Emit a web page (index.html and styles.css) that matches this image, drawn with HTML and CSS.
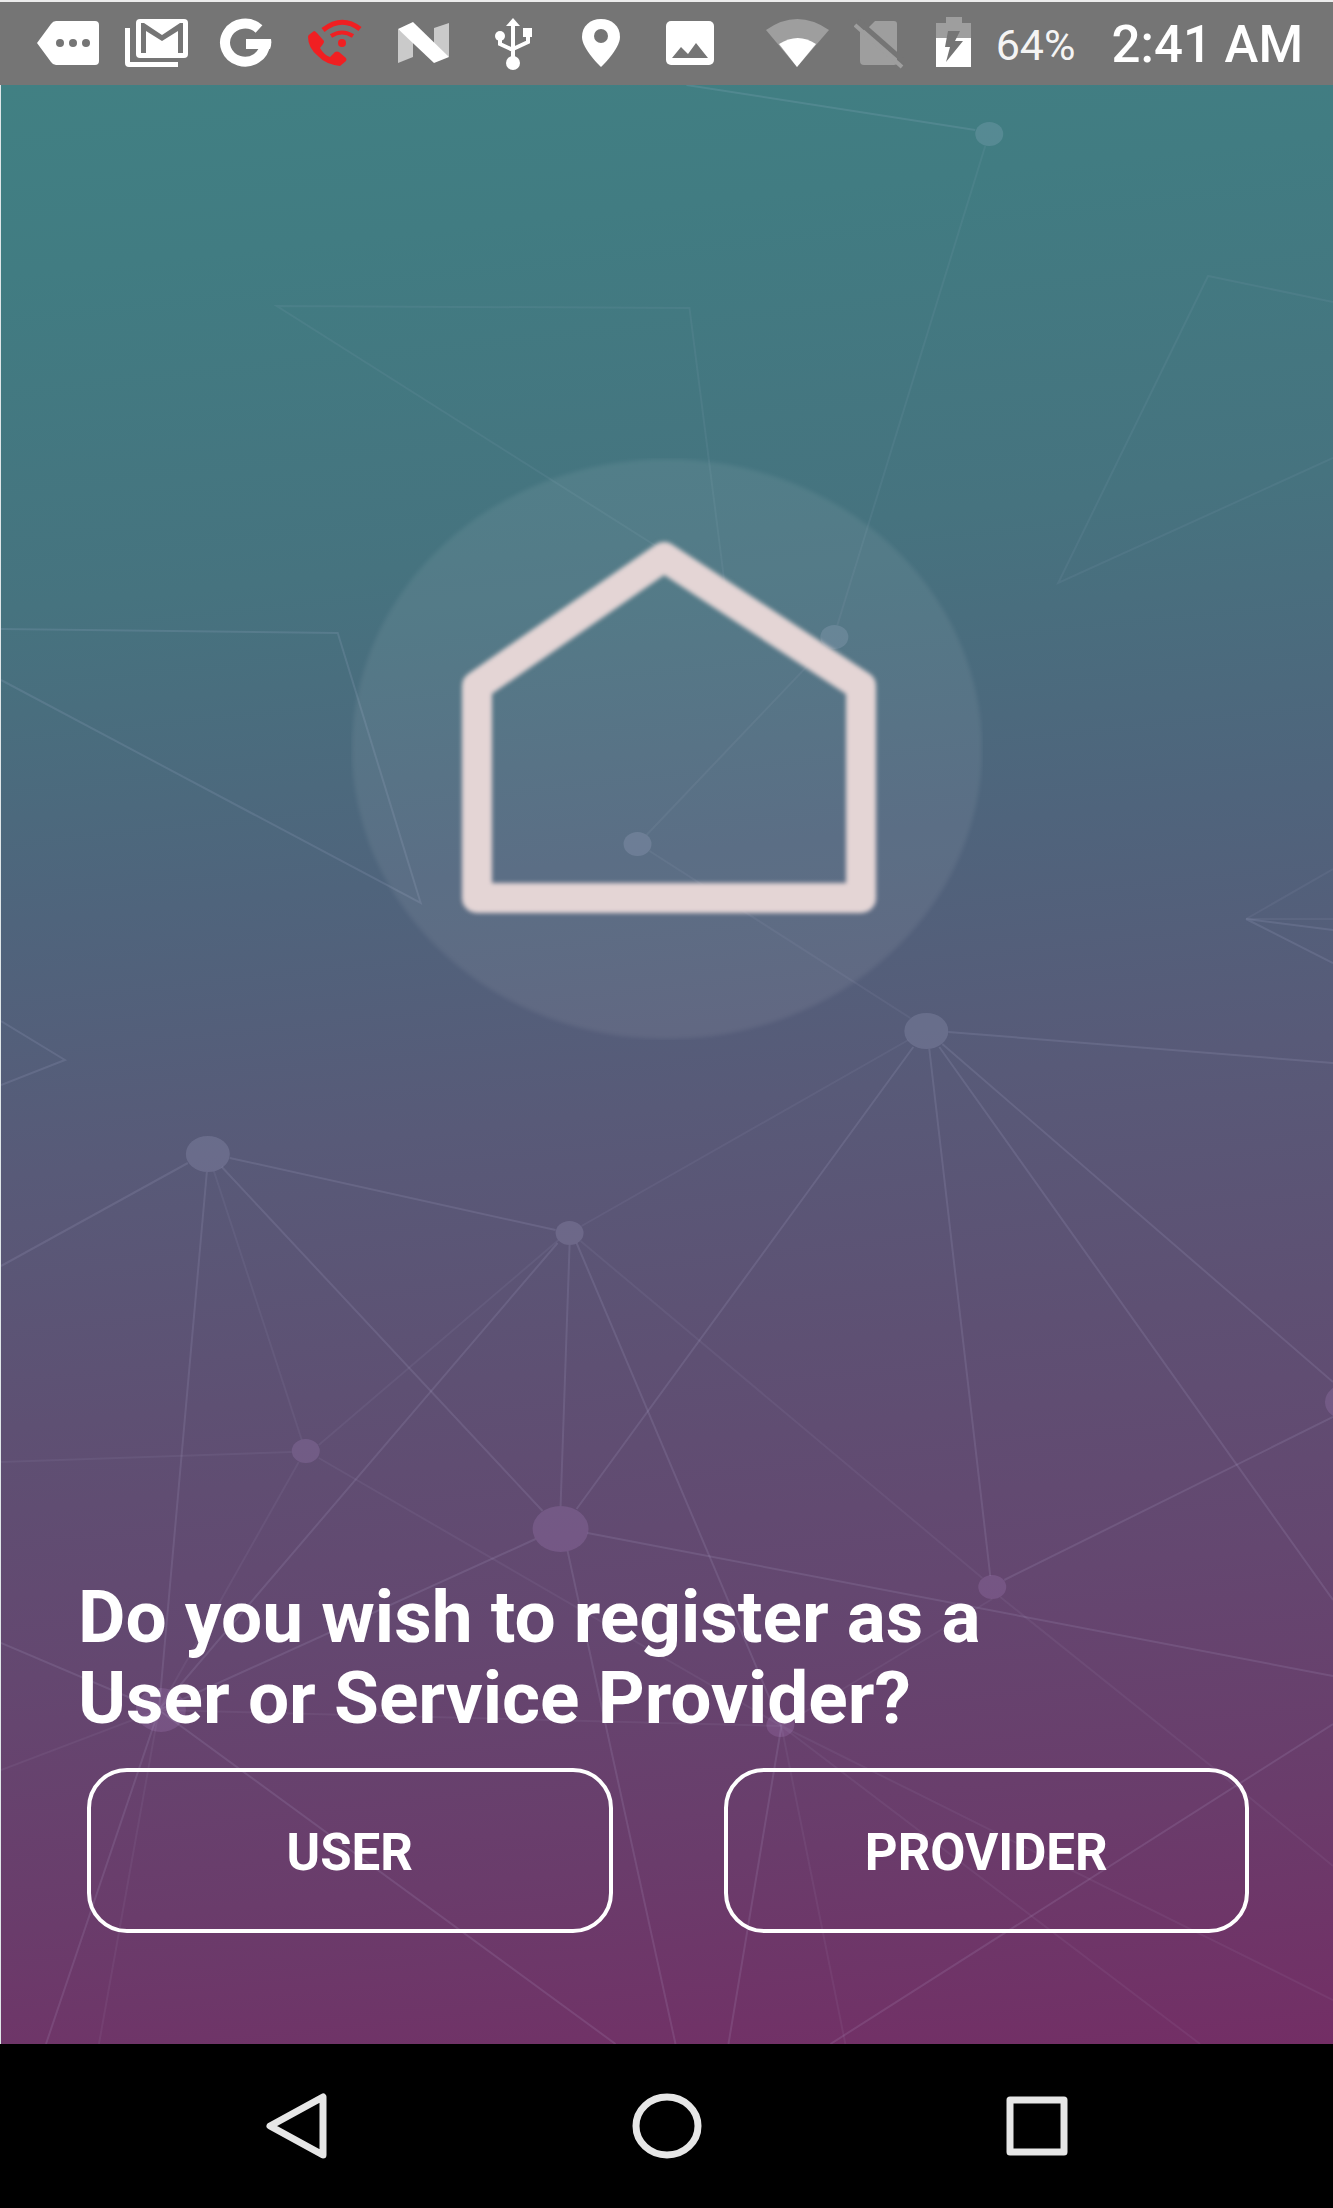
FILE: index.html
```html
<!DOCTYPE html>
<html lang="en">
<head>
<meta charset="utf-8">
<meta name="viewport" content="width=device-width, initial-scale=1">
<title>Register</title>
<link rel="stylesheet" href="styles.css">
</head>
<body>
<div class="page">
  <header class="status">
    <div class="notifications">
      <svg class="icon" viewBox="0 0 64 64"><path class="on" d="M1 33L15 14q2-3 5-3H59q4 0 4 4V51q0 4-4 4H20q-3 0-5-3z"/><g class="hole"><circle cx="24" cy="33" r="4"/><circle cx="37" cy="33" r="4"/><circle cx="50" cy="33" r="4"/></g></svg>
      <svg class="icon" viewBox="0 0 64 64"><path class="on" d="M0 18H5V52H53V57H4Q0 57 0 53z"/><rect class="on" x="11" y="9" width="52" height="39" rx="4"/><path class="hole" d="M16 13h3L37 25 55 13h3V43H53V21L37 31 21 21V43H16z"/></svg>
      <svg class="icon" viewBox="0 0 64 64"><path class="line" stroke-width="10" d="M45 19A20 19 0 1 0 51 34"/><path class="on" d="M32 29H57Q58 34 56 39H32z"/></svg>
      <svg class="icon" viewBox="0 0 64 64"><path class="red" d="M5 27Q5 25 7 24L11 21Q12 21 14 23L21 31Q21 33 20 34L17 38Q21 45 27 47L32 42Q34 41 36 42L43 48Q44 50 43 51L37 56Q22 54 15 46Q5 38 5 27z"/><circle class="red" cx="39" cy="33" r="4"/><g class="red-line"><path d="M28 26Q39 19 50 26" stroke-width="4"/><path d="M20 20Q39 5 57 19" stroke-width="5"/></g></svg>
      <svg class="icon" viewBox="0 0 64 64"><path fill="#cacaca" d="M6 19L21 31V47L6 53zM42 18L57 13V47L42 38z"/><path class="on" d="M6 19L21 12 57 47 42 53z"/></svg>
      <svg class="icon" viewBox="0 0 64 64"><path class="on" d="M32 8l7 8H25z"/><circle class="on" cx="32" cy="53" r="7"/><circle class="on" cx="19" cy="26" r="5"/><path class="on" d="M42 18h9v9h-9z"/><path class="line" stroke-width="4" d="M32 14V50M19 27V34L32 40M47 26V32L32 39"/></svg>
      <svg class="icon" viewBox="0 0 64 64"><path class="on" d="M31 9C20 9 12 16 12 27c0 12 19 30 19 30s19-18 19-30C50 16 42 9 31 9z"/><circle class="hole" cx="31" cy="26" r="7"/></svg>
      <svg class="icon" viewBox="0 0 64 64"><rect class="on" x="7" y="11" width="48" height="44" rx="5"/><path class="hole" d="M13 48l9-11 7 7 8-11 12 15z"/></svg>
    </div>
    <div class="system">
      <svg class="icon" viewBox="0 0 64 64"><path class="off" d="M0 20Q31 -2 63 20L31 57z"/><path class="on" d="M13 34Q32 22 50 34L31 57z"/></svg>
      <svg class="icon icon-sim" viewBox="0 0 50 64"><path class="off" d="M15 17l6-6h19q3 0 3 3v38q0 3-3 3H10q-4 0-4-4V22z"/><path d="M4 11L52 53" stroke="#757575" stroke-width="5"/><path d="M1 15L48 57" stroke="#9e9e9e" stroke-width="4"/></svg>
      <svg class="icon icon-battery" viewBox="0 0 36 64"><path class="off" d="M0 13H10V7H26V13H35V28H0z"/><path class="on" d="M0 28H35V57H0z"/><path class="hole" d="M12 21H24L19 31H27L10 52 14 37H9z"/></svg>
      <span class="percent">64%</span>
      <time class="clock">2:41 AM</time>
    </div>
  </header>

  <main class="scene">
    <svg class="network" viewBox="0 85 1333 1959" preserveAspectRatio="none" aria-hidden="true">
      <g class="links strong">
        <path d="M0 629L337 633 420 903 0 680M0 1021L64 1060 0 1085"/>
        <path d="M0 1266L187 1163M206 1172L158 1710M221 1167L542 1511M229 1158L555 1230"/>
        <path d="M557 1243L158 1710M569 1245L560 1506M576 1243L781 1726"/>
        <path d="M913 1047L576 1509M929 1049L990 1576M939 1047L1333 1600M942 1044L1333 1382M948 1032L1333 1063"/>
        <path d="M535 1539L158 1710M587 1533L1333 1676M567 1551L675 2044M1004 1580L1333 1417"/>
        <path d="M1333 963L1246 919 1333 930"/>
        <path d="M158 1710L45 2044M158 1710L615 2044M781 1726L728 2044M830 2044L1333 1724"/>
        <path d="M0 1643L158 1710M686 85L975 130"/>
      </g>
      <g class="links faint">
        <path d="M276 306L689 308 725 590zM1333 302L1208 276 1058 583 1333 458M1246 919L1333 869M1246 919H1333"/>
        <path d="M985 146L837 625M825 647L646 835M649 851L910 1018M908 1040L581 1226"/>
        <path d="M213 1171L301 1440M291 1452L0 1462M298 1462L158 1710M318 1445L558 1240M318 1458L781 1726M580 1241L982 1578"/>
        <path d="M0 1770L158 1710 98 2044M158 1710L781 1726M992 1599L781 1726M1000 1597L1216 1770 1333 1866M781 1726L845 2044M781 1726L1200 2044M781 1726L1333 2000"/>
      </g>
      <g class="nodes">
        <ellipse cx="989" cy="134" rx="14" ry="12"/><ellipse cx="834" cy="637" rx="14" ry="12"/><ellipse cx="637" cy="844" rx="14" ry="12"/>
        <ellipse cx="926" cy="1031" rx="22" ry="18"/><ellipse cx="207" cy="1154" rx="22" ry="18"/><ellipse cx="569" cy="1233" rx="14" ry="12"/>
      </g>
      <g class="nodes low">
        <ellipse cx="305" cy="1451" rx="14" ry="12"/><ellipse cx="560" cy="1529" rx="28" ry="23"/><ellipse cx="992" cy="1587" rx="14" ry="12"/>
        <ellipse cx="1347" cy="1402" rx="22" ry="18"/><ellipse cx="780" cy="1725" rx="14" ry="12"/><ellipse cx="160" cy="1710" rx="25" ry="22"/>
      </g>
    </svg>

    <svg class="logo" viewBox="0 0 632 582" role="img" aria-label="Home">
      <ellipse class="disc" cx="316" cy="291" rx="315" ry="290"/>
      <path class="house" d="M126 228L313 99 510 228V440H126z"/>
    </svg>

    <section class="choice">
      <h1 class="question">Do you wish to register as a<br>User or Service Provider?</h1>
      <div class="options">
        <button class="option" type="button">USER</button>
        <button class="option" type="button">PROVIDER</button>
      </div>
    </section>
  </main>

  <nav class="keys">
    <button class="key" type="button" aria-label="Back"><svg viewBox="0 0 80 80"><path d="M66 11V69L13 40z"/></svg></button>
    <button class="key" type="button" aria-label="Home"><svg viewBox="0 0 80 80"><ellipse cx="40" cy="40" rx="31" ry="29"/></svg></button>
    <button class="key" type="button" aria-label="Recent apps"><svg viewBox="0 0 80 80"><rect x="13" y="14" width="54" height="52"/></svg></button>
  </nav>
</div>
</body>
</html>
```
FILE: styles.css
```css
* { box-sizing: border-box; }

body {
  margin: 0;
  background: #000;
  color: #fff;
  font-family: Roboto, "Liberation Sans", sans-serif;
}

.page {
  display: flex;
  flex-direction: column;
  min-height: 100vh;
  border-top: 2px solid #ececec;
}

/* Status bar */
.status {
  display: flex;
  justify-content: space-between;
  align-items: center;
  height: 83px;
  padding: 0 30px 3px 36px;
  background: #757575;
}
.notifications, .system { display: flex; align-items: center; }
.notifications { gap: 25px; }
.system { gap: 24px; }
.icon { display: block; flex: none; width: 64px; height: 64px; }
.icon-sim { width: 50px; }
.icon-battery { width: 36px; margin-left: 8px; }
.on { fill: #fff; }
.off { fill: #9e9e9e; }
.hole { fill: #757575; }
.line { fill: none; stroke: #fff; }
.red { fill: #f01f22; }
.red-line { fill: none; stroke: #f01f22; }
.percent, .clock { padding-top: 6px; }
.percent { font-size: 43px; line-height: 48px; color: #f4f4f4; }
.clock { margin-left: 12px; font-size: 51px; line-height: 56px; font-weight: 500; }

/* Registration screen */
.scene {
  position: relative;
  flex: 1;
  display: flex;
  flex-direction: column;
  border-left: 1px solid #dfe6e8;
  padding: 373px 77px 111px;
  background: linear-gradient(174deg, #418083 0%, #417c82 9%, #46737f 25%, #4f647c 40%, #585a78 52%, #5e5073 64%, #644770 76%, #6a3c6b 88%, #732e65 100%);
}
.network { position: absolute; inset: 0; width: 100%; height: 100%; }
.links { fill: none; stroke: #d8d8ff; stroke-width: 2; }
.strong { stroke-opacity: .11; }
.faint { stroke-opacity: .06; }
.nodes { fill: #dcdcff; fill-opacity: .14; }
.low { fill: #e0b4ff; }

.logo {
  position: relative;
  align-self: center;
  width: 632px;
  max-width: 100%;
}
.disc { fill: #fff; fill-opacity: .07; filter: blur(2px); }
.house {
  fill: none;
  stroke: #e4d5d5;
  stroke-width: 30;
  stroke-linejoin: round;
  filter: blur(2px);
}

.choice { position: relative; margin-top: auto; }
.question { margin: 0; font-size: 73px; line-height: 81px; font-weight: 700; }
.options { display: flex; gap: 111px; margin-top: 29px; padding: 0 7px 0 9px; }
.option {
  flex: 1;
  height: 165px;
  padding: 4px 0 0;
  border: 4px solid #fff;
  border-radius: 40px;
  background: none;
  color: #fff;
  font: 700 51px/60px Roboto, "Liberation Sans", sans-serif;
}

/* System navigation */
.keys {
  display: flex;
  justify-content: center;
  align-items: center;
  gap: 290px;
  height: 164px;
  background: #000;
}
.key { width: 80px; height: 80px; padding: 0; border: 0; background: none; }
.key svg { display: block; fill: none; stroke: #e6e6e6; stroke-width: 7; stroke-linejoin: round; }
```
